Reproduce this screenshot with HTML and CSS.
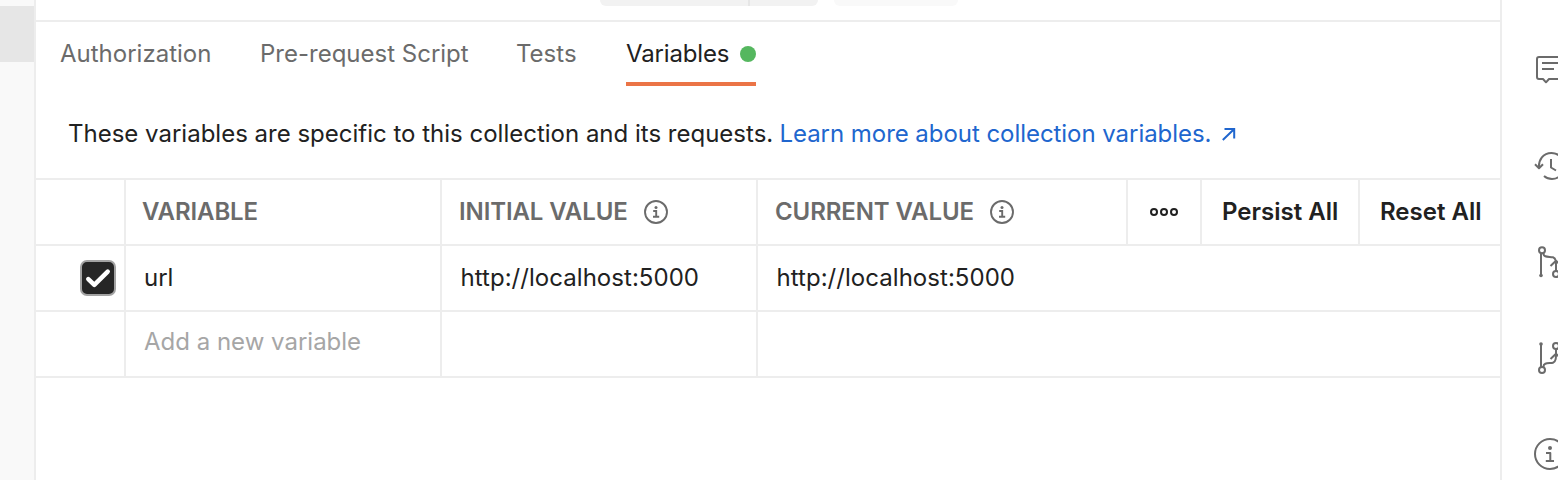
FILE: index.html
```html
<!DOCTYPE html>
<html lang="en">
<head>
<meta charset="utf-8">
<title>Collection variables</title>
<link rel="stylesheet" href="styles.css">
</head>
<body>
<div class="app">
  <aside class="sidebar"><div class="sidebar-item"></div></aside>
  <main class="main">
    <div class="toolbar">
      <div class="split-button"><span class="split-label"></span><span class="split-arrow"></span></div>
      <div class="ghost-button"></div>
    </div>
    <nav class="tabs">
      <a class="tab tab-auth"><span>Authorization</span></a>
      <a class="tab tab-pre"><span>Pre-request Script</span></a>
      <a class="tab tab-tests"><span>Tests</span></a>
      <a class="tab tab-active"><span>Variables</span><i class="dot"></i></a>
    </nav>
    <p class="intro"><span class="intro-text">These variables are specific to this collection and its requests.</span><a class="link">Learn more about collection variables.</a><svg class="arrow" width="16" height="16" viewBox="0 0 16 16"><path d="M3.5 3H13.2V12.5M13.2 3L1.8 14"/></svg></p>
    <div class="table">
      <div class="row head">
        <div class="cell check-cell"></div>
        <div class="cell"><span class="h-variable">VARIABLE</span></div>
        <div class="cell"><span class="h-initial">INITIAL VALUE</span><svg class="info" width="24" height="24" viewBox="0 0 24 24"><circle cx="12" cy="12" r="11"/><path d="M9.2 11H12.2V16.7M9 16.7H15.2"/><circle class="fill" cx="12" cy="7.4" r="1.5"/></svg></div>
        <div class="cell"><span class="h-current">CURRENT VALUE</span><svg class="info" width="24" height="24" viewBox="0 0 24 24"><circle cx="12" cy="12" r="11"/><path d="M9.2 11H12.2V16.7M9 16.7H15.2"/><circle class="fill" cx="12" cy="7.4" r="1.5"/></svg></div>
        <div class="cell action more-cell"><svg class="more" width="30" height="10" viewBox="0 0 30 10"><circle cx="5" cy="5" r="3"/><circle cx="15" cy="5" r="3"/><circle cx="25" cy="5" r="3"/></svg></div>
        <div class="cell action"><span class="persist">Persist All</span></div>
        <div class="cell action"><span class="reset">Reset All</span></div>
      </div>
      <div class="row">
        <div class="cell check-cell"><span class="checkbox"><svg width="32" height="32" viewBox="0 0 32 32"><path d="M6.3 17.1L12.3 22.8L25.7 9.6"/></svg></span></div>
        <div class="cell value"><span>url</span></div>
        <div class="cell value"><span class="url">http://localhost:5000</span></div>
        <div class="cell value last"><span class="url">http://localhost:5000</span></div>
      </div>
      <div class="row">
        <div class="cell check-cell"></div>
        <div class="cell value placeholder"><span>Add a new variable</span></div>
        <div class="cell"></div>
        <div class="cell last"></div>
      </div>
    </div>
  </main>
  <aside class="rail">
    <svg width="32" height="32" viewBox="0 0 32 32"><path d="M30 3H5Q3 3 3 5V23Q3 25 5 25H9L12 28.3L15 25H30M8 9H26M8 15H20"/></svg>
    <svg width="32" height="32" viewBox="0 0 32 32"><path d="M5 17.5C4.5 10 9 3 17.5 3C25 3 30 9 30 16S25 29 18 29Q13.5 29 10 26M1 14.2L5 18.2L9 14.2M17 9V17.5L22 20.5"/></svg>
    <svg width="32" height="32" viewBox="0 0 32 32"><circle cx="8" cy="4.2" r="3"/><path d="M7 7V30M9.5 7C9 12 16 10.3 19 11.3C22.5 12.5 22 16 22 25M16.5 20L22 14.7L27.5 20"/><circle class="fill" cx="7" cy="29.5" r="1.8"/><circle cx="22" cy="28" r="3"/></svg>
    <svg width="32" height="32" viewBox="0 0 32 32"><circle class="fill" cx="7" cy="2" r="1.8"/><circle cx="22" cy="4" r="3"/><path d="M7 2V25M22 7C22 15 22.5 19.5 19 20.7C16 21.7 9 20 9.5 25M16.5 17L22 11.7L27.5 17"/><circle cx="8" cy="28" r="3"/></svg>
    <svg width="32" height="32" viewBox="0 0 32 32"><circle cx="16" cy="16" r="15"/><path d="M12 15H16.3V23M11.8 23H20"/><circle class="fill" cx="16" cy="10" r="2"/></svg>
  </aside>
</div>
</body>
</html>
```
FILE: styles.css
```css
* { box-sizing: border-box; }
body {
  margin: 0;
  background: #fff;
  color: #212121;
  font: 400 24px/32px Inter, "Liberation Sans", sans-serif;
  overflow: hidden;
}
.app { display: grid; grid-template-columns: 36px 1464px 58px; height: 480px; overflow: hidden; }
.sidebar { background: #f9f9f9; border-right: 2px solid #ededed; padding-top: 6px; }
.sidebar-item { height: 56px; background: #e6e6e6; }
.toolbar {
  display: flex; gap: 16px; align-items: flex-start;
  height: 22px; padding-left: 564px; border-bottom: 2px solid #ededed;
}
.split-button, .ghost-button { height: 6px; border-radius: 0 0 8px 8px; }
.split-button { display: flex; width: 218px; background: #f2f2f2; }
.split-label { width: 150px; border-right: 2px solid #e6e6e6; }
.ghost-button { width: 124px; background: #f9f9f9; }
.tabs { display: flex; gap: 48px; height: 64px; padding-left: 24px; color: #6b6b6b; }
.tab { display: flex; align-items: center; height: 64px; white-space: nowrap; }
.tab-auth { width: 152px; }
.tab-pre { width: 208px; }
.tab-tests { width: 62px; }
.tab-active { width: 130px; justify-content: space-between; color: #212121; border-bottom: 4px solid #eb7446; padding-top: 4px; letter-spacing: -0.15px; }
.dot { width: 16px; height: 16px; border-radius: 50%; background: #55b75f; }
.intro { display: flex; align-items: center; height: 92px; margin: 0; padding: 4px 0 0 32px; white-space: nowrap; }
.intro-text { width: 711.5px; }
.link { width: 441.5px; color: #2066ce; letter-spacing: -0.05px; }
.arrow { fill: none; stroke: #2066ce; stroke-width: 2; }
.table { border-top: 2px solid #ededed; }
.row { display: grid; grid-template-columns: 90px 316px 316px 370px 74px 158px 140px; height: 66px; border-bottom: 2px solid #ededed; }
.cell { display: flex; align-items: center; padding-left: 17px; border-right: 2px solid #ededed; white-space: nowrap; }
.cell:last-child { border-right: 0; }
.last { grid-column: 4 / -1; }
.head { color: #6b6b6b; font-weight: 600; letter-spacing: -0.1px; }
.h-variable { margin-left: -1px; }
.h-initial { width: 168px; }
.h-current { width: 198px; }
.value { padding-left: 18px; }
.url { padding-left: 0.5px; letter-spacing: 0.04px; }
.placeholder { color: #a6a6a6; padding-bottom: 4px; }
.check-cell { justify-content: flex-end; padding: 0 8px 0 0; }
.checkbox { display: grid; width: 36px; height: 36px; border: 2px solid #a3a3a3; border-radius: 7px; background: #262626; }
.checkbox svg { fill: none; stroke: #fff; stroke-width: 4.5; stroke-linecap: round; stroke-linejoin: round; }
.info { margin-left: 17px; fill: none; stroke: #6b6b6b; stroke-width: 1.9; }
.fill { fill: #6b6b6b; stroke: none; }
.action { color: #212121; padding-left: 20px; letter-spacing: 0; }
.more-cell { padding-left: 21px; }
.more { fill: none; stroke: #212121; stroke-width: 2; }
.rail { display: flex; flex-direction: column; gap: 64px; border-left: 2px solid #ededed; padding: 54px 0 0 32px; overflow: hidden; }
.rail svg { flex: none; fill: none; stroke: #6b6b6b; stroke-width: 2; stroke-linejoin: round; }
.rail .fill { fill: #6b6b6b; stroke: none; }
```
